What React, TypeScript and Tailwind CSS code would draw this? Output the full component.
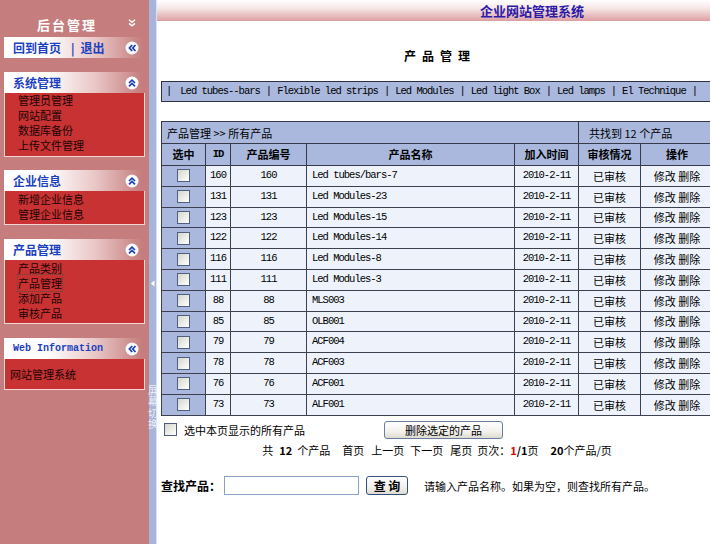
import type { ReactNode } from "react";

const MONO = "font-['Liberation_Mono','Noto_Sans_CJK_SC',monospace] text-[10.5px] tracking-[-1px]";

const rows: [number, number, string][] = [
  [160, 160, "Led tubes/bars-7"],
  [131, 131, "Led Modules-23"],
  [123, 123, "Led Modules-15"],
  [122, 122, "Led Modules-14"],
  [116, 116, "Led Modules-8"],
  [111, 111, "Led Modules-3"],
  [88, 88, "MLS003"],
  [85, 85, "OLB001"],
  [79, 79, "ACF004"],
  [78, 78, "ACF003"],
  [76, 76, "ACF001"],
  [73, 73, "ALF001"],
];

const categories = [
  "Led tubes--bars",
  "Flexible led strips",
  "Led Modules",
  "Led light Box",
  "Led lamps",
  "El Technique",
];

function CircleIcon({ dir }: { dir: "up" | "left" }) {
  return (
    <svg width="14" height="14" viewBox="0 0 14 14">
      <circle cx="7" cy="7" r="6.5" fill="#fbfbff" />
      {dir === "up" ? (
        <g fill="none" stroke="#1b3fb3" strokeWidth="1.7">
          <path d="M4 7 L7 4.2 L10 7" />
          <path d="M4 10.3 L7 7.5 L10 10.3" />
        </g>
      ) : (
        <g fill="none" stroke="#1b3fb3" strokeWidth="1.7">
          <path d="M7.2 4 L4.4 7 L7.2 10" />
          <path d="M10.5 4 L7.7 7 L10.5 10" />
        </g>
      )}
    </svg>
  );
}

function SideHead({ children, icon }: { children: ReactNode; icon: "up" | "left" }) {
  return (
    <div className="mx-[4px] h-[21px] flex items-center pl-[9px] pr-[6px] bg-[linear-gradient(to_right,#ffffff_30%,#e9c6c6_65%,#c57d7d_98%)]">
      <div className="flex-1 flex items-center text-[12px] leading-[14px] font-bold text-[#1b40bf]">
        {children}
      </div>
      <CircleIcon dir={icon} />
    </div>
  );
}

function Panel({ children, className }: { children: ReactNode; className: string }) {
  return (
    <div className={"mx-[4px] bg-[#c83232] border border-t-0 border-[#f2d6d6] text-[11px] leading-[15px] text-[#1a0505] " + className}>
      {children}
    </div>
  );
}

function Sidebar() {
  return (
    <aside className="w-[149px] shrink-0 bg-[#c57d7d] flex flex-col">
      <div className="h-[37px] flex items-end pb-[4px]">
        <span className="w-[127px] pl-[7px] text-center text-[13px] leading-[16px] font-bold tracking-[2px] text-white">
          后台管理
        </span>
        <svg className="ml-[1px] mb-[6px]" width="8" height="8" viewBox="0 0 8 8">
          <g fill="none" stroke="#fff" strokeWidth="1.4">
            <path d="M1 0.8 L4 3.3 L7 0.8" />
            <path d="M1 4.4 L4 6.9 L7 4.4" />
          </g>
        </svg>
      </div>

      <SideHead icon="left">
        <span>回到首页</span>
        <span className="ml-[10px] mr-[6px]">|</span>
        <span>退出</span>
      </SideHead>

      <div className="mt-[14px]">
        <SideHead icon="up">系统管理</SideHead>
        <Panel className="pl-[13px] pb-[3px]">
          <div>管理员管理</div>
          <div>网站配置</div>
          <div>数据库备份</div>
          <div>上传文件管理</div>
        </Panel>
      </div>

      <div className="mt-[13px]">
        <SideHead icon="up">企业信息</SideHead>
        <Panel className="pl-[13px] pt-[1px] pb-[2px]">
          <div>新增企业信息</div>
          <div>管理企业信息</div>
        </Panel>
      </div>

      <div className="mt-[14px]">
        <SideHead icon="up">产品管理</SideHead>
        <Panel className="pl-[13px] pt-[1px] pb-[2px]">
          <div>产品类别</div>
          <div>
            <span className="outline outline-1 outline-dotted outline-[#5a4a3a]">产品管理</span>
          </div>
          <div>添加产品</div>
          <div>审核产品</div>
        </Panel>
      </div>

      <div className="mt-[14px]">
        <SideHead icon="left">
          <span className="font-['Liberation_Mono',monospace] text-[10px] tracking-[0px]">Web Information</span>
        </SideHead>
        <Panel className="pl-[5px] pt-[8px] pb-[7px]">
          <div>网站管理系统</div>
        </Panel>
      </div>
    </aside>
  );
}

function Splitter() {
  return (
    <div className="w-[8px] shrink-0 bg-[#a6b5d9] border-r border-[#dbe2f1] flex flex-col items-center pt-[280px]">
      <svg width="5" height="7" viewBox="0 0 5 7">
        <path d="M4.5 0.5 L0.8 3.5 L4.5 6.5 Z" fill="#ffffff" />
      </svg>
      <div className="mt-[98px] [writing-mode:vertical-rl] text-[10px] leading-[10px] tracking-[1.5px] text-[#eef1fa]">
        屏幕切换
      </div>
    </div>
  );
}

function Check() {
  return (
    <span className="block w-[13px] h-[13px] border border-[#4f5f80] bg-[linear-gradient(135deg,#d6d6ce,#ffffff)]" />
  );
}

function Main() {
  return (
    <main className="w-[560px] shrink-0 flex flex-col">
      <header className="h-[21px] pl-[323px] flex items-center bg-[linear-gradient(to_bottom,#ffffff,#f6e6e6_40%,#dc9fa2)]">
        <span className="text-[13px] leading-[16px] font-bold text-[#2b1ba6]">企业网站管理系统</span>
      </header>

      <div className="px-[4px]">
        <div className="mt-[27px] flex justify-center gap-[6px] text-[12px] leading-[16px] font-bold">
          <span>产</span>
          <span>品</span>
          <span>管</span>
          <span>理</span>
        </div>

        <div className={"mt-[17px] h-[21px] border border-[#2e3140] bg-[#a9b8dc] flex items-center pl-[4px] gap-[6px] whitespace-nowrap overflow-hidden text-black " + MONO}>
          <span className="shrink-0">|</span>
          {categories.map((c, i) => (
            <span key={c} className={"shrink-0 flex gap-[6px] " + (i === 0 ? "ml-[3px]" : "")}>
              <span>{c}</span>
              <span>|</span>
            </span>
          ))}
        </div>

        <table className="mt-[19px] w-[552px] table-fixed border-collapse">
          <colgroup>
            <col className="w-[44px]" />
            <col className="w-[25px]" />
            <col className="w-[76px]" />
            <col className="w-[208px]" />
            <col className="w-[64px]" />
            <col className="w-[62px]" />
            <col className="w-[73px]" />
          </colgroup>
          <thead>
            <tr className="h-[22px] bg-[#a9b8dc]">
              <td colSpan={5} className="border border-[#363a4a] pl-[5px] text-left leading-[14px]">
                产品管理 &gt;&gt; 所有产品
              </td>
              <td colSpan={2} className="border border-[#363a4a] pl-[10px] text-left leading-[14px] whitespace-nowrap">
                共找到 12 个产品
              </td>
            </tr>
            <tr className="h-[22px] bg-[#a9b8dc] font-bold">
              <th className="border border-[#363a4a] font-bold">选中</th>
              <th className={"border border-[#363a4a] font-bold " + MONO}>ID</th>
              <th className="border border-[#363a4a] font-bold">产品编号</th>
              <th className="border border-[#363a4a] font-bold">产品名称</th>
              <th className="border border-[#363a4a] font-bold">加入时间</th>
              <th className="border border-[#363a4a] font-bold">审核情况</th>
              <th className="border border-[#363a4a] font-bold">操作</th>
            </tr>
          </thead>
          <tbody>
            {rows.map(([id, code, name]) => (
              <tr key={id} className="h-[20.8px] bg-[#eef3fb]">
                <td className="border border-[#3c4050] bg-[#a9b8dc] p-0">
                  <div className="flex justify-center">
                    <Check />
                  </div>
                </td>
                <td className={"border border-[#3c4050] text-center " + MONO}>{id}</td>
                <td className={"border border-[#3c4050] text-center " + MONO}>{code}</td>
                <td className={"border border-[#3c4050] pl-[5px] " + MONO}>{name}</td>
                <td className={"border border-[#3c4050] text-center " + MONO}>2010-2-11</td>
                <td className="border border-[#3c4050] text-center leading-[14px]">已审核</td>
                <td className="border border-[#3c4050] text-center leading-[14px]">
                  修改&nbsp;删除
                </td>
              </tr>
            ))}
          </tbody>
        </table>

        <div className="mt-[3px] h-[22px] flex items-center">
          <div className="w-[223px] flex items-center pl-[3px]">
            <Check />
            <span className="ml-[7px] leading-[14px]">选中本页显示的所有产品</span>
          </div>
          <button className="w-[119px] h-[18px] rounded-[3px] border border-[#6a7ea3] bg-[linear-gradient(to_bottom,#ffffff,#f2f1ec_60%,#dedbd0)] text-[11px] leading-[14px] text-black">
            删除选定的产品
          </button>
        </div>

        <div className="mt-[2px] h-[14px] flex justify-center items-baseline leading-[14px]">
          <span>共</span>
          <b className="ml-[6px] mr-[5px]">12</b>
          <span>个产品</span>
          <span className="ml-[12px]">首页</span>
          <span className="ml-[7px]">上一页</span>
          <span className="ml-[6px]">下一页</span>
          <span className="ml-[7px]">尾页</span>
          <span className="ml-[5px]">页次：</span>
          <b className="text-[#e00000]">1</b>
          <b>/1</b>
          <span>页</span>
          <b className="ml-[12px]">20</b>
          <span>个产品/页</span>
        </div>

        <div className="mt-[19px] h-[20px] flex items-center">
          <span className="w-[63px] text-[12px] leading-[14px] font-bold">查找产品：</span>
          <span className="block w-[135px] h-[19px] border border-[#8aa3c4] bg-white" />
          <button className="ml-[7px] w-[42px] h-[19px] rounded-[3px] border border-[#34507e] bg-[linear-gradient(to_bottom,#ffffff,#f2f1ec_60%,#dedbd0)] text-[12px] leading-[14px] font-bold text-black">
            查&nbsp;询
          </button>
          <span className="ml-[16px] leading-[14px]">请输入产品名称。如果为空，则查找所有产品。</span>
        </div>
      </div>
    </main>
  );
}

export default function App() {
  return (
    <div className="flex w-[710px] h-[544px] overflow-hidden bg-white text-[11px] text-black font-['Noto_Sans_CJK_SC','Noto_Sans',sans-serif]">
      <Sidebar />
      <Splitter />
      <Main />
    </div>
  );
}
